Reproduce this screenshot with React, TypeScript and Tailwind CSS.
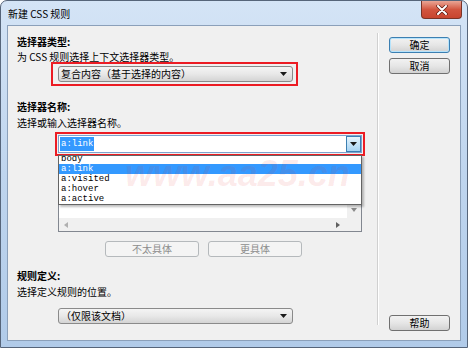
import React from 'react';

const CJK = { fontFamily: '"Noto Sans CJK SC", "Microsoft YaHei", sans-serif' };
const MONO = { fontFamily: '"Liberation Mono", "DejaVu Sans Mono", monospace' };

const SELECTOR_ITEMS = ['body', 'a:link', 'a:visited', 'a:hover', 'a:active'];

// small black down-triangle used by the win7 combo boxes
function Caret() {
  return (
    <svg width="7" height="4" viewBox="0 0 7 4" className="shrink-0">
      <path d="M0 0 H7 L3.5 4 Z" fill="#1a1a1a" />
    </svg>
  );
}

function WinSelect({ label, width }: { label: string; width: string }) {
  return (
    <div
      className={`${width} h-[16px] flex items-center justify-between pl-[2px] pr-[5px] rounded-[3px] border border-[#8a8a8a] bg-gradient-to-b from-[#f4f4f4] via-[#e8e8e8] to-[#d4d4d4] text-[10px] leading-none text-black`}
    >
      <span>{label}</span>
      <Caret />
    </div>
  );
}

function WinButton({ label, primary, disabled, width = 'w-[61px]' }: { label: string; primary?: boolean; disabled?: boolean; width?: string }) {
  return (
    <button
      className={`${width} h-[16px] flex items-center justify-center rounded-[3px] border text-[10px] leading-none ${
        disabled
          ? 'border-[#b5b9bc] bg-[#f4f4f4] text-[#8d8d8d]'
          : primary
            ? 'border-[#3c7fb1] bg-gradient-to-b from-[#f2f2f2] via-[#e6e6e6] to-[#d2d2d2] text-black shadow-[inset_0_0_0_1px_#b6e3fb]'
            : 'border-[#707070] bg-gradient-to-b from-[#f2f2f2] via-[#e6e6e6] to-[#d2d2d2] text-black'
      }`}
    >
      {label}
    </button>
  );
}

export default function App() {
  return (
    <div
      className="relative w-[468px] h-[348px] overflow-hidden rounded-t-[7px] border border-[#56657a] bg-gradient-to-b from-[#d4e4f6] via-[#bfd5ee] to-[#b1cbe9]"
      style={CJK}
    >
      {/* title bar */}
      <div className="h-[24px] flex items-center pl-[7px] text-[10px] text-black">新建 CSS 规则</div>

      {/* close button */}
      <div className="absolute top-0 right-[5px] w-[41px] h-[18px] rounded-b-[4px] border border-t-0 border-[#7a3326] bg-gradient-to-b from-[#e9a595] via-[#d2553f] to-[#c8452f] flex items-center justify-center">
        <svg width="12" height="10" viewBox="0 0 12 10">
          <path d="M2 1 L10 9 M10 1 L2 9" stroke="#5a1a10" strokeWidth="3.4" strokeLinecap="round" />
          <path d="M2 1 L10 9 M10 1 L2 9" stroke="#ffffff" strokeWidth="2" strokeLinecap="round" />
        </svg>
      </div>

      {/* client area */}
      <div className="mx-[6px] h-[316px] border border-[#8ba0ba] bg-[#f0f0f0] flex">
        {/* left column */}
        <div className="w-[369px] pl-[9px] pt-[8px] flex flex-col">
          <div className="leading-[16px] text-[10px] font-bold text-black">选择器类型:</div>
          <div className="leading-[14px] text-[10px] text-black">为 CSS 规则选择上下文选择器类型。</div>
          <div className="-mt-[2px] ml-[34px] w-[247px] h-[24px] border-2 border-[#ec1c24] flex items-center pl-[5px]">
            <WinSelect label="复合内容（基于选择的内容）" width="w-[235px]" />
          </div>

          <div className="mt-[13px] leading-[16px] text-[10px] font-bold text-black">选择器名称:</div>
          <div className="leading-[16px] text-[10px] text-black">选择或输入选择器名称。</div>
          <div className="mt-[1px] ml-[38px] w-[310px] h-[24px] border-2 border-[#ec1c24] flex items-center px-[1px]">
            <div className="w-[304px] h-[18px] border border-[#7da2ce] bg-white flex items-center">
              <span className="ml-[1px] px-[1px] h-[14px] leading-[14px] bg-[#3399ff] text-white text-[9px]" style={MONO}>a:link</span>
              <div className="ml-auto w-[15px] h-[16px] border border-[#3c7fb1] bg-gradient-to-b from-[#e5f4fd] to-[#a7d4f3] flex items-center justify-center">
                <Caret />
              </div>
            </div>
          </div>

          {/* selector tree box (mostly hidden by the dropdown list) */}
          <div className="ml-[41px] w-[304px] h-[76px] border border-[#828790] bg-white flex flex-col">
            <div className="flex-1 flex">
              <div className="flex-1" />
              <div className="w-[14px] bg-[#f0f0f0] flex flex-col justify-end items-center pb-[6px]">
                <svg width="6" height="4" viewBox="0 0 6 4"><path d="M0 0 H6 L3 4 Z" fill="#8a8a8a" /></svg>
              </div>
            </div>
            <div className="h-[13px] bg-[#f0f0f0] flex items-center pl-[5px] pr-[21px] justify-between">
              <svg width="4" height="6" viewBox="0 0 4 6"><path d="M4 0 V6 L0 3 Z" fill="#b0b0b0" /></svg>
              <svg width="4" height="6" viewBox="0 0 4 6"><path d="M0 0 V6 L4 3 Z" fill="#606060" /></svg>
            </div>
          </div>

          <div className="mt-[9px] ml-[88px] flex gap-[9px]">
            <WinButton label="不太具体" disabled width="w-[94px]" />
            <WinButton label="更具体" disabled width="w-[94px]" />
          </div>

          <div className="mt-[11px] leading-[16px] text-[10px] font-bold text-black">规则定义:</div>
          <div className="leading-[16px] text-[10px] text-black">选择定义规则的位置。</div>
          <div className="mt-[8px] ml-[41px]">
            <WinSelect label="（仅限该文档）" width="w-[235px]" />
          </div>
        </div>

        {/* separator */}
        <div className="mt-[7px] h-[292px] w-[2px] border-l border-[#d0d0d0] border-r border-r-white" />

        {/* right column */}
        <div className="ml-[10px] pt-[11px] pb-[9px] flex flex-col gap-[5px]">
          <WinButton label="确定" primary />
          <WinButton label="取消" />
          <div className="mt-auto">
            <WinButton label="帮助" />
          </div>
        </div>
      </div>

      {/* open dropdown list of the selector combo */}
      <div className="absolute left-[57px] top-[154px] w-[304px] h-[50px] border border-[#646464] bg-white overflow-hidden shadow-[2px_2px_2px_rgba(0,0,0,0.25)]" style={MONO}>
        {SELECTOR_ITEMS.map((item, i) => (
          <div
            key={item}
            className={`h-[10px] leading-[10px] pl-[2px] text-[9px] ${i === 0 ? '-mt-[2px]' : ''} ${
              item === 'a:link' ? 'bg-[#3399ff] text-white' : 'text-black'
            }`}
          >
            {item}
          </div>
        ))}
      </div>

      {/* watermark */}
      <div
        className="absolute left-[124px] top-[155px] text-[36px] leading-none font-bold italic text-[#e83030]/10 pointer-events-none whitespace-nowrap"
        style={{ fontFamily: '"Liberation Sans", Arial, sans-serif' }}
      >
        www.aa25.cn
      </div>
    </div>
  );
}
